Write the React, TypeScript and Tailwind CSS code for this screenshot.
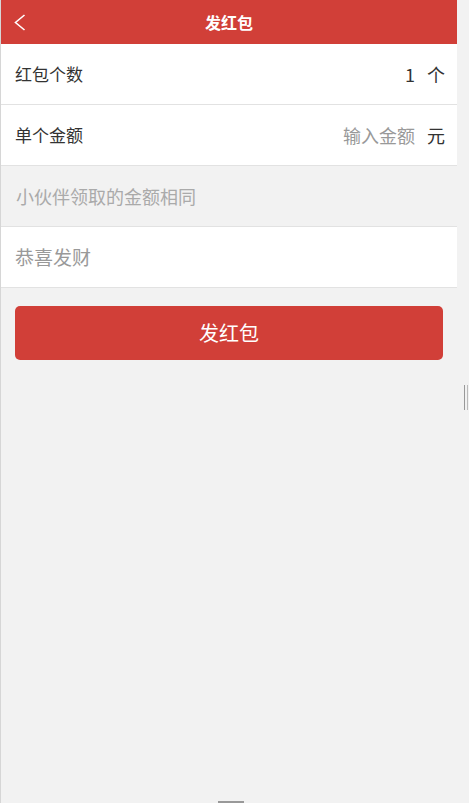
import { useState } from "react";

const font = { fontFamily: '"Noto Sans CJK SC", "Noto Sans", sans-serif' };

function BackIcon() {
  return (
    <svg width="12" height="17" viewBox="0 0 12 17" fill="none">
      <path d="M10.5 1 L1.5 8.5 L10.5 16" stroke="white" strokeWidth="1.6" strokeLinejoin="miter" />
    </svg>
  );
}

export default function App() {
  const [count, setCount] = useState("1");
  const [amount, setAmount] = useState("");
  const [wish, setWish] = useState("");

  return (
    <div
      className="relative w-[469px] h-[803px] overflow-hidden bg-[#f2f2f2] border-l border-[#d6d6d6]"
      style={font}
    >
      <div className="w-[456px]">
        {/* header */}
        <div className="grid h-[44px] grid-cols-[60px_1fr_60px] items-center bg-[#d13f38]">
          <button className="flex h-full items-center pl-[13px] pt-[1px]">
            <BackIcon />
          </button>
          <div className="text-center text-[16px] font-bold text-white">发红包</div>
          <div />
        </div>

        {/* count */}
        <div className="flex h-[61px] items-center justify-between border-b border-[#e2e2e2] bg-white pl-[14px] pr-[12px]">
          <span className="text-[17px] text-[#333]">红包个数</span>
          <div className="flex items-center gap-[12px]">
            <input
              value={count}
              onChange={(e) => setCount(e.target.value)}
              className="w-[40px] bg-transparent text-right text-[18px] text-[#333] outline-none"
            />
            <span className="text-[18px] text-[#333]">个</span>
          </div>
        </div>

        {/* amount */}
        <div className="flex h-[61px] items-center justify-between border-b border-[#e2e2e2] bg-white pl-[14px] pr-[12px]">
          <span className="text-[17px] text-[#333]">单个金额</span>
          <div className="flex items-center gap-[12px]">
            <input
              value={amount}
              onChange={(e) => setAmount(e.target.value)}
              placeholder="输入金额"
              className="w-[120px] bg-transparent text-right text-[18px] text-[#333] outline-none placeholder:text-[#999]"
            />
            <span className="text-[18px] text-[#333]">元</span>
          </div>
        </div>

        {/* hint */}
        <div className="flex h-[60px] items-center pl-[15px] text-[18px] text-[#aaa]">
          小伙伴领取的金额相同
        </div>

        {/* wish */}
        <div className="flex h-[62px] items-center border-y border-[#e2e2e2] bg-white pl-[14px] pr-[12px]">
          <input
            value={wish}
            onChange={(e) => setWish(e.target.value)}
            placeholder="恭喜发财"
            className="w-full bg-transparent text-[19px] text-[#333] outline-none placeholder:text-[#999]"
          />
        </div>

        <button className="ml-[14px] mt-[18px] flex h-[54px] w-[428px] items-center justify-center rounded-[5px] bg-[#d13f38] text-[20px] text-white">
          发红包
        </button>
      </div>

      {/* window resize marks */}
      <div className="absolute left-[463px] top-[385px] flex h-[25px] gap-[2px]">
        <div className="w-px bg-[#999]" />
        <div className="w-px bg-[#bbb]" />
      </div>
      <div className="absolute bottom-0 left-[217px] h-[2px] w-[26px] bg-[#999]" />
    </div>
  );
}
